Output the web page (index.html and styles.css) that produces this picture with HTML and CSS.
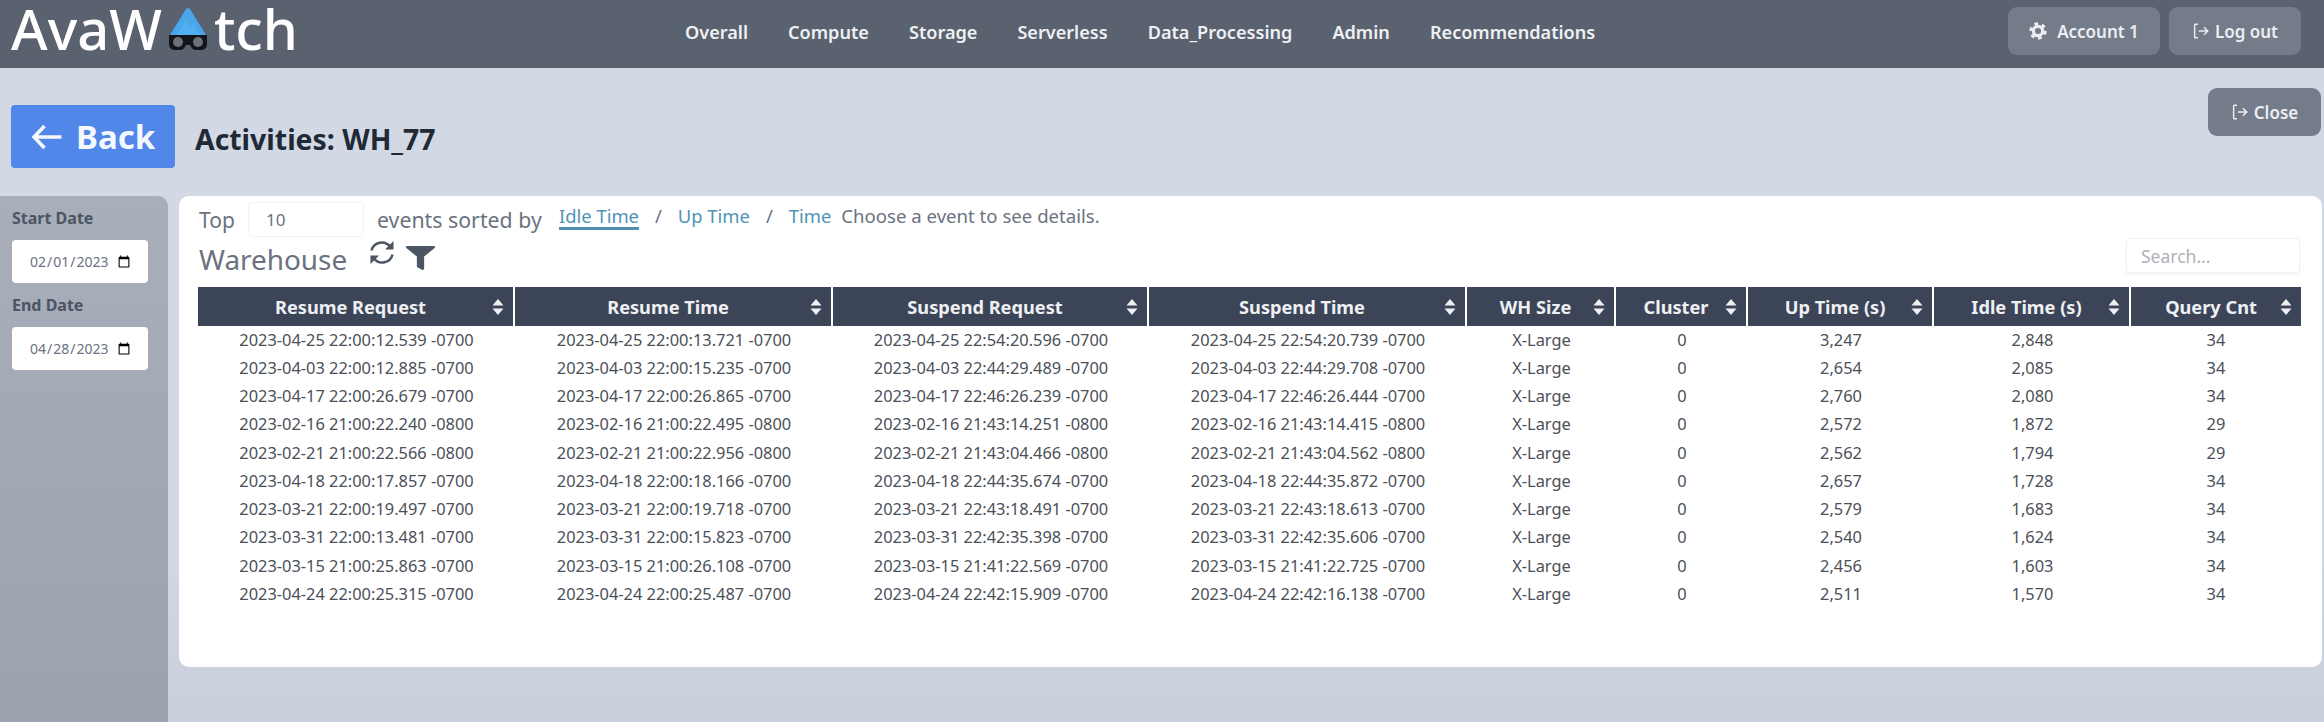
FILE: index.html
```html
<!DOCTYPE html>
<html lang="en">
<head>
    <meta charset="UTF-8">
    <meta name="viewport" content="width=device-width, initial-scale=1.0">
    <title>AvaWatch - Activities</title>
    <link rel="stylesheet" href="styles.css">
</head>
<body>
    <header class="topbar">
        <a href="#" class="logo">AvaW<svg class="logo-mark" viewBox="0 0 38 43"><path d="M1 28 L17 2 Q19 0 21 2 L37 28 Z" fill="#4aa6ea"/><path d="M17 13 L21 20 L24 16 L27 22 L33 28 L8 28 Z" fill="#52aeee"/><path d="M0 28 H38 V37 Q38 43 31 43 H27 Q23 43 21 38 H17 Q15 43 11 43 H7 Q0 43 0 37 Z" fill="#11141a"/><circle cx="9" cy="35" r="5" fill="#6d7075"/><circle cx="29" cy="35" r="5" fill="#6d7075"/></svg>tch</a>
        <nav class="topnav">
            <a href="#">Overall</a>
            <a href="#">Compute</a>
            <a href="#">Storage</a>
            <a href="#">Serverless</a>
            <a href="#">Data_Processing</a>
            <a href="#">Admin</a>
            <a href="#">Recommendations</a>
        </nav>
        <div class="topbtns">
            <button class="btn btn-account">
                <svg class="ico-gear" viewBox="0 0 20 20"><circle cx="10" cy="10" r="5.2" fill="none" stroke="currentColor" stroke-width="3.6"/><circle cx="10" cy="10" r="8" fill="none" stroke="currentColor" stroke-width="3.4" stroke-dasharray="4 4.38"/></svg>
                Account 1
            </button>
            <button class="btn btn-logout">
                <svg class="ico-out" viewBox="0 0 24 24"><path d="M8 3H4.5a1 1 0 0 0-1 1v16a1 1 0 0 0 1 1H8M9 12h12M16 7l5 5-5 5"/></svg>
                Log out
            </button>
        </div>
    </header>

    <div class="titlebar">
        <a href="#" class="back">
            <svg class="ico-back" viewBox="0 0 32 26"><path d="M30 13H3M13 2 2.5 13 13 24"/></svg>
            Back
        </a>
        <h1 class="pagetitle">Activities: WH_77</h1>
        <button class="btn btn-close">
            <svg class="ico-out" viewBox="0 0 24 24"><path d="M8 3H4.5a1 1 0 0 0-1 1v16a1 1 0 0 0 1 1H8M9 12h12M16 7l5 5-5 5"/></svg>
            Close
        </button>
    </div>

    <div class="content">
        <aside class="sidebar">
            <label class="date-label" for="start">Start Date</label>
            <input class="date-input" id="start" type="date" value="2023-02-01">
            <label class="date-label" for="end">End Date</label>
            <input class="date-input" id="end" type="date" value="2023-04-28">
        </aside>

        <section class="panel">
            <div class="sortrow">
                <span class="top-label">Top</span>
                <input class="top-input" type="text" value="10">
                <span class="sorted-label">events sorted by</span>
                <a href="#" class="sortlink active">Idle Time</a>
                <span class="slash">/</span>
                <a href="#" class="sortlink">Up Time</a>
                <span class="slash">/</span>
                <a href="#" class="sortlink">Time</a>
                <span class="hint">Choose a event to see details.</span>
            </div>
            <div class="tablehead">
                <h2 class="tabletitle">Warehouse</h2>
                <svg class="ico-sync" viewBox="0 0 26 25"><path d="M2.5 10.5A10.5 10.5 0 0 1 21 6.5"/><path d="M23.5 14.5A10.5 10.5 0 0 1 5 18.5"/><path class="solid" d="M24.5 1v8.5h-8.5zM1.5 24v-8.5h8.5z"/></svg>
                <svg class="ico-filter" viewBox="0 0 512 512" preserveAspectRatio="none"><path d="M487.976 0H24.028C2.71 0-8.047 25.866 7.058 40.971L192 225.941V432c0 7.831 3.821 15.17 10.237 19.662l80 55.98C298.02 518.69 320 507.493 320 487.98V225.941l184.947-184.97C520.021 25.896 509.338 0 487.976 0z"/></svg>
                <input class="search" type="text" placeholder="Search...">
            </div>
            <table class="grid">
                <colgroup>
                    <col class="c-date1"><col class="c-date2"><col class="c-date3"><col class="c-date4">
                    <col class="c-size"><col class="c-cluster"><col class="c-up"><col class="c-idle"><col class="c-query">
                </colgroup>
                <thead>
                    <tr>
                        <th><div class="th-in"><span>Resume Request</span><svg class="caret" viewBox="0 0 12 16"><path d="M6 0l5.5 6.5H.5zM6 16 .5 9.5h11z"/></svg></div></th>
                        <th><div class="th-in"><span>Resume Time</span><svg class="caret" viewBox="0 0 12 16"><path d="M6 0l5.5 6.5H.5zM6 16 .5 9.5h11z"/></svg></div></th>
                        <th><div class="th-in"><span>Suspend Request</span><svg class="caret" viewBox="0 0 12 16"><path d="M6 0l5.5 6.5H.5zM6 16 .5 9.5h11z"/></svg></div></th>
                        <th><div class="th-in"><span>Suspend Time</span><svg class="caret" viewBox="0 0 12 16"><path d="M6 0l5.5 6.5H.5zM6 16 .5 9.5h11z"/></svg></div></th>
                        <th><div class="th-in"><span>WH Size</span><svg class="caret" viewBox="0 0 12 16"><path d="M6 0l5.5 6.5H.5zM6 16 .5 9.5h11z"/></svg></div></th>
                        <th><div class="th-in"><span>Cluster</span><svg class="caret" viewBox="0 0 12 16"><path d="M6 0l5.5 6.5H.5zM6 16 .5 9.5h11z"/></svg></div></th>
                        <th><div class="th-in"><span>Up Time (s)</span><svg class="caret" viewBox="0 0 12 16"><path d="M6 0l5.5 6.5H.5zM6 16 .5 9.5h11z"/></svg></div></th>
                        <th><div class="th-in"><span>Idle Time (s)</span><svg class="caret" viewBox="0 0 12 16"><path d="M6 0l5.5 6.5H.5zM6 16 .5 9.5h11z"/></svg></div></th>
                        <th><div class="th-in"><span>Query Cnt</span><svg class="caret" viewBox="0 0 12 16"><path d="M6 0l5.5 6.5H.5zM6 16 .5 9.5h11z"/></svg></div></th>
                    </tr>
                </thead>
                <tbody>
                    <tr><td>2023-04-25 22:00:12.539 -0700</td><td>2023-04-25 22:00:13.721 -0700</td><td>2023-04-25 22:54:20.596 -0700</td><td>2023-04-25 22:54:20.739 -0700</td><td>X-Large</td><td>0</td><td>3,247</td><td>2,848</td><td>34</td></tr>
                    <tr><td>2023-04-03 22:00:12.885 -0700</td><td>2023-04-03 22:00:15.235 -0700</td><td>2023-04-03 22:44:29.489 -0700</td><td>2023-04-03 22:44:29.708 -0700</td><td>X-Large</td><td>0</td><td>2,654</td><td>2,085</td><td>34</td></tr>
                    <tr><td>2023-04-17 22:00:26.679 -0700</td><td>2023-04-17 22:00:26.865 -0700</td><td>2023-04-17 22:46:26.239 -0700</td><td>2023-04-17 22:46:26.444 -0700</td><td>X-Large</td><td>0</td><td>2,760</td><td>2,080</td><td>34</td></tr>
                    <tr><td>2023-02-16 21:00:22.240 -0800</td><td>2023-02-16 21:00:22.495 -0800</td><td>2023-02-16 21:43:14.251 -0800</td><td>2023-02-16 21:43:14.415 -0800</td><td>X-Large</td><td>0</td><td>2,572</td><td>1,872</td><td>29</td></tr>
                    <tr><td>2023-02-21 21:00:22.566 -0800</td><td>2023-02-21 21:00:22.956 -0800</td><td>2023-02-21 21:43:04.466 -0800</td><td>2023-02-21 21:43:04.562 -0800</td><td>X-Large</td><td>0</td><td>2,562</td><td>1,794</td><td>29</td></tr>
                    <tr><td>2023-04-18 22:00:17.857 -0700</td><td>2023-04-18 22:00:18.166 -0700</td><td>2023-04-18 22:44:35.674 -0700</td><td>2023-04-18 22:44:35.872 -0700</td><td>X-Large</td><td>0</td><td>2,657</td><td>1,728</td><td>34</td></tr>
                    <tr><td>2023-03-21 22:00:19.497 -0700</td><td>2023-03-21 22:00:19.718 -0700</td><td>2023-03-21 22:43:18.491 -0700</td><td>2023-03-21 22:43:18.613 -0700</td><td>X-Large</td><td>0</td><td>2,579</td><td>1,683</td><td>34</td></tr>
                    <tr><td>2023-03-31 22:00:13.481 -0700</td><td>2023-03-31 22:00:15.823 -0700</td><td>2023-03-31 22:42:35.398 -0700</td><td>2023-03-31 22:42:35.606 -0700</td><td>X-Large</td><td>0</td><td>2,540</td><td>1,624</td><td>34</td></tr>
                    <tr><td>2023-03-15 21:00:25.863 -0700</td><td>2023-03-15 21:00:26.108 -0700</td><td>2023-03-15 21:41:22.569 -0700</td><td>2023-03-15 21:41:22.725 -0700</td><td>X-Large</td><td>0</td><td>2,456</td><td>1,603</td><td>34</td></tr>
                    <tr><td>2023-04-24 22:00:25.315 -0700</td><td>2023-04-24 22:00:25.487 -0700</td><td>2023-04-24 22:42:15.909 -0700</td><td>2023-04-24 22:42:16.138 -0700</td><td>X-Large</td><td>0</td><td>2,511</td><td>1,570</td><td>34</td></tr>
                </tbody>
            </table>
        </section>
    </div>
</body>
</html>
```

FILE: styles.css
```css
* {
    box-sizing: border-box;
}
body {
    margin: 0;
    height: 722px;
    overflow: hidden;
    font-family: "Noto Sans", "Open Sans", sans-serif;
    background: linear-gradient(#d3d9e4 75%, #c9cfda);
    color: #4b5058;
}
a {
    text-decoration: none;
}

/* top bar */
.topbar {
    display: flex;
    align-items: center;
    height: 68px;
    background-color: #5a6270;
    padding: 0 23px 0 11px;
}
.logo {
    display: flex;
    align-items: flex-start;
    width: 674px;
    height: 68px;
    font-size: 56px;
    font-weight: 500;
    line-height: 56px;
    color: #fff;
}
.logo-mark {
    width: 38px;
    height: 43px;
    margin: 7px 7px 0 7px;
}
.topnav {
    display: flex;
    gap: 40px;
    margin-bottom: 4px;
}
.topnav a {
    color: #eef0f3;
    font-size: 18.1px;
    font-weight: 600;
}
.topbtns {
    display: flex;
    gap: 9px;
    margin-left: auto;
    margin-bottom: 6px;
}
.btn {
    display: flex;
    align-items: center;
    justify-content: center;
    gap: 5px;
    height: 48px;
    border: 0;
    border-radius: 9px;
    background-color: #747b89;
    color: #eceef2;
    font-family: inherit;
    font-size: 17px;
    font-weight: 600;
}
.btn-account {
    width: 152px;
    gap: 10px;
}
.btn-logout {
    width: 132px;
}
.btn-close {
    width: 113px;
    margin: 20px 3px 0 auto;
}
.ico-gear {
    width: 18px;
    height: 18px;
}
.ico-out {
    width: 18px;
    height: 18px;
    fill: none;
    stroke: currentColor;
    stroke-width: 2;
}

/* back + title */
.titlebar {
    display: flex;
    align-items: flex-start;
    height: 128px;
}
.back {
    display: flex;
    align-items: center;
    gap: 12px;
    width: 164px;
    height: 63px;
    margin: 37px 0 0 11px;
    padding-left: 20px;
    border-radius: 4px;
    background-color: #5087e8;
    color: #f5f8fe;
    font-size: 33px;
    font-weight: 700;
}
.ico-back {
    width: 33px;
    height: 26px;
    fill: none;
    stroke: currentColor;
    stroke-width: 3.5;
}
.pagetitle {
    margin: 54px 0 0 20px;
    font-size: 28.4px;
    line-height: 34px;
    font-weight: 700;
    color: #1f2937;
}

/* main area */
.content {
    display: flex;
    gap: 11px;
}
.sidebar {
    display: flex;
    flex-direction: column;
    width: 168px;
    height: 526px;
    padding: 10px 20px 0 12px;
    border-radius: 0 10px 0 0;
    background: linear-gradient(#a8aeba, #9ca2ae);
}
.date-label {
    font-size: 16px;
    line-height: 24px;
    font-weight: 700;
    color: #4b5563;
    margin-bottom: 10px;
}
.date-input {
    width: 136px;
    height: 43px;
    margin-bottom: 10px;
    padding: 0 15px 0 17px;
    border: 0;
    border-radius: 4px;
    background-color: #fff;
    color: #6b7280;
    font-family: inherit;
    font-size: 14px;
}
.panel {
    width: 2143px;
    height: 471px;
    padding: 6px 21px 0 19px;
    border-radius: 10px;
    background-color: #fff;
}

/* sort row */
.sortrow {
    display: flex;
    align-items: center;
    height: 35px;
    color: #6b7280;
}
.top-label {
    width: 50px;
    padding-left: 1px;
    font-size: 21px;
}
.top-input {
    width: 116px;
    height: 35px;
    margin-right: 13px;
    padding: 0 0 0 17px;
    border: 1px solid #f2f3f5;
    border-radius: 4px;
    color: #6b7280;
    font-family: inherit;
    font-size: 17px;
}
.sorted-label {
    width: 182px;
    font-size: 21.3px;
}
.sortlink {
    font-size: 18.4px;
    line-height: 22px;
    margin-bottom: 4px;
    border-bottom: 3px solid transparent;
    color: #4f93b5;
}
.sortlink.active {
    border-bottom-color: #4f8fb0;
}
.slash {
    margin: 0 16px 7px;
    font-size: 18.4px;
    line-height: 22px;
}
.hint {
    margin: 0 0 7px 10px;
    font-size: 18.6px;
    line-height: 22px;
}

.tablehead {
    display: flex;
    align-items: center;
    height: 50px;
}
.tabletitle {
    margin: 0 22px 6px 1px;
    font-size: 27.9px;
    font-weight: 400;
    color: #6b7280;
}
.ico-sync {
    width: 26px;
    height: 25px;
    margin: 0 11px 19px 0;
    fill: none;
    stroke: #4b5563;
    stroke-width: 2.5;
}
.ico-sync .solid {
    fill: #4b5563;
    stroke: none;
}
.ico-filter {
    width: 29px;
    height: 24px;
    margin-bottom: 8px;
    fill: #4b5563;
}
.search {
    width: 174px;
    height: 35px;
    margin: 0 1px 13px auto;
    padding: 0 14px;
    border: 1px solid #eff1f3;
    border-radius: 4px;
    box-shadow: 0 2px 3px rgba(0, 0, 0, 0.05);
    font-family: inherit;
    font-size: 17.5px;
}
.search::placeholder {
    color: #aeb2b8;
}

/* table */
.grid {
    width: 2103px;
    table-layout: fixed;
    border-collapse: separate;
    border-spacing: 0;
}
.c-date1 { width: 317px; }
.c-date2 { width: 318px; }
.c-date3 { width: 316px; }
.c-date4 { width: 318px; }
.c-size { width: 149px; }
.c-cluster { width: 132px; }
.c-up { width: 186px; }
.c-idle { width: 197px; }
.c-query { width: 170px; }

.grid th {
    height: 39px;
    padding: 0;
    background-color: #3c4558;
    border-right: 2px solid #fff;
    color: #eef0f3;
    font-size: 18.2px;
    font-weight: 700;
}
.grid th:last-child {
    border-right: 0;
}
.th-in {
    display: flex;
    align-items: center;
    padding: 0 9px 0 11px;
}
.th-in span {
    flex: 1;
    text-align: center;
}
.caret {
    width: 12px;
    height: 16px;
    fill: #eef0f3;
}
.grid td {
    height: 28.25px;
    padding: 0 0 2px;
    text-align: center;
    font-size: 16.4px;
    color: #4b5058;
}
```
